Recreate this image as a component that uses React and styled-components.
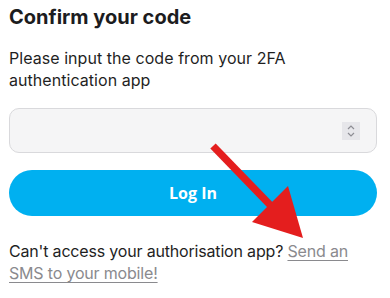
import styled, { createGlobalStyle } from "styled-components";

const GlobalStyle = createGlobalStyle`
  body {
    margin: 0;
    background: #fff;
    font-family: "Inter", "Liberation Sans", sans-serif;
  }
`;

const Page = styled.div`
  position: relative;
  width: 390px;
  height: 298px;
  overflow: hidden;
  padding: 0 13px 0 9px;
  box-sizing: border-box;
`;

const Title = styled.h1`
  margin: 0;
  padding-top: 3px;
  font-size: 20px;
  line-height: 28px;
  font-weight: 700;
  color: #1c1c1e;
`;

const Text = styled.p`
  margin: ${(p) => p.margin || "0"};
  font-size: 16px;
  line-height: 22px;
  color: #1f1f1f;
  letter-spacing: ${(p) => p.spacing || "0"};
`;

const InputBox = styled.div`
  margin-top: 17px;
  height: 45px;
  border: 1px solid #d9d9dc;
  border-radius: 10px;
  background: #f5f5f6;
  display: flex;
  align-items: center;
  justify-content: flex-end;
  padding-right: 16px;
  box-sizing: border-box;
`;

const Spinner = styled.div`
  width: 18px;
  height: 18px;
  background: #e6e6ea;
  display: flex;
  align-items: center;
  justify-content: center;
`;

const Button = styled.button`
  margin-top: 17px;
  width: 100%;
  height: 46px;
  border: none;
  border-radius: 23px;
  background: #00b0f0;
  color: #fff;
  font-family: "Open Sans", "Noto Sans", sans-serif;
  font-weight: 700;
  font-size: 16px;
`;

const Link = styled.a`
  color: #8a8a8e;
  text-decoration: underline;
  text-underline-offset: 3px;
`;

const Arrow = styled.svg`
  position: absolute;
  left: 0;
  top: 0;
  pointer-events: none;
`;

export default function App() {
  return (
    <>
      <GlobalStyle />
      <Page>
        <Title>Confirm your code</Title>
        <Text margin="16px 0 0" spacing="0.05px">
          Please input the code from your 2FA
          <br />
          authentication app
        </Text>
        <InputBox>
          <Spinner>
            <svg width="10" height="14" viewBox="0 0 10 14" fill="none" stroke="#8d8d94" strokeWidth="1.2">
              <path d="M2 5l3-3 3 3M2 9l3 3 3-3" />
            </svg>
          </Spinner>
        </InputBox>
        <Button>Log In</Button>
        <Text margin="24px 0 0" spacing="-0.18px">
          Can't access your authorisation app? <Link>Send an</Link>
          <br />
          <Link>SMS to your mobile!</Link>
        </Text>
        <Arrow width="390" height="298" viewBox="0 0 390 298">
          <line x1="213" y1="146" x2="275" y2="210" stroke="#e41e1e" strokeWidth="7.5" />
          <polygon points="288,186 252,222 303,238" fill="#e41e1e" />
        </Arrow>
      </Page>
    </>
  );
}
